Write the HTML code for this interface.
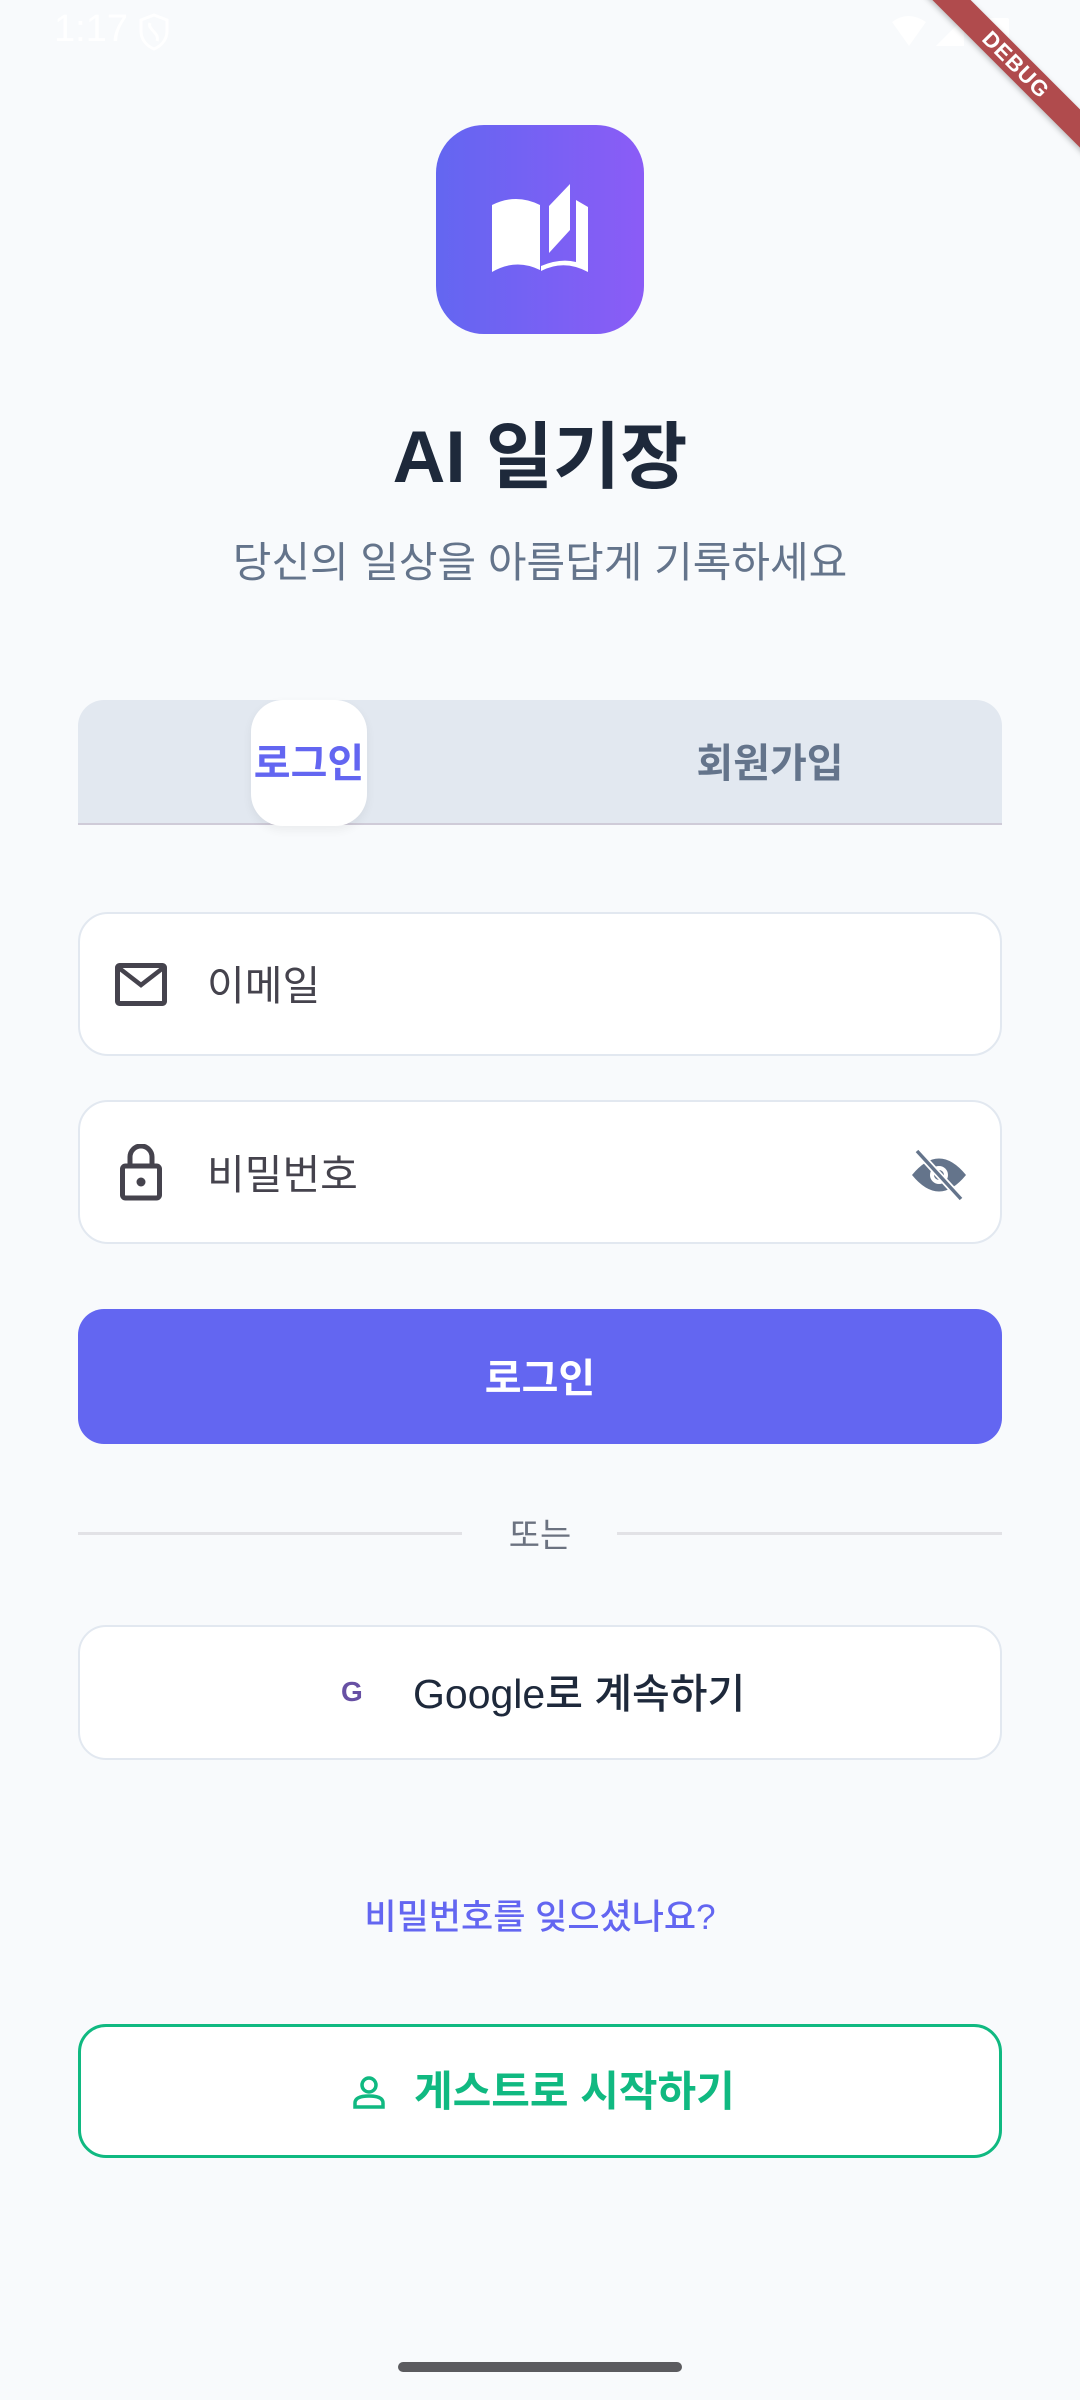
<!DOCTYPE html>
<html><head><meta charset="utf-8">
<style>
*{margin:0;padding:0;box-sizing:border-box}
body{width:1080px;height:2400px;background:#f8fafc;position:relative;overflow:hidden;font-family:"Liberation Sans","Noto Sans CJK KR",sans-serif}
.abs{position:absolute}
.c{text-align:center;left:0;width:1080px}
.field{position:absolute;left:78px;width:924px;height:144px;background:#fff;border:2px solid #e2e8f0;border-radius:30px}
</style></head><body>
<div class="abs" style="left:54px;top:8px;color:#fff;font-size:38px;font-family:'Liberation Sans',sans-serif">1:17</div>
<svg class="abs" style="left:138px;top:13px" width="32" height="38" viewBox="0 0 32 38"><path d="M16 2 L29 7 V18 C29 27 23 33 16 36 C9 33 3 27 3 18 V7 Z" fill="none" stroke="#fff" stroke-width="3"/><path d="M12 10 C9 16 22 20 19 28" fill="none" stroke="#fff" stroke-width="3"/></svg>
<svg class="abs" style="left:890px;top:14px" width="120" height="34" viewBox="0 0 120 34"><path d="M2 8 Q18 -4 36 8 L19 32 Z" fill="#fff"/><path d="M46 32 L74 4 V32 Z" fill="#fff"/><rect x="99" y="4" width="20" height="30" rx="2" fill="#fff"/></svg>
<div class="abs" style="left:866px;top:51px;width:300px;height:27px;background:#b04b4d;transform:rotate(45deg);color:#fff;font-weight:bold;font-size:22px;line-height:27px;text-align:center;letter-spacing:1px;box-shadow:0 2px 6px rgba(0,0,0,.25)">DEBUG</div>

<div class="abs" style="left:436px;top:125px;width:208px;height:209px;border-radius:48px;background:linear-gradient(90deg,#6366f1,#8b5cf6)"></div>
<svg class="abs" style="left:436px;top:125px" width="208" height="209" viewBox="436 125 208 209">
<path d="M492 205 Q516 193 540 205 V270 Q516 258 492 272 Z" fill="#fff"/>
<path d="M549 206 L570 184 V230 L549 253 Z" fill="#fff"/>
<path d="M576 200 L588 207 V272 Q564 259 541 271 L541 266 Q560 258 576 262 Z" fill="#fff"/>
</svg>

<div class="abs c" style="top:408px;font-size:73px;font-weight:bold;color:#1e293b;line-height:100px">AI 일기장</div>
<div class="abs c" style="top:535px;font-size:42px;color:#64748b;line-height:56px">당신의 일상을 아름답게 기록하세요</div>

<div class="abs" style="left:78px;top:700px;width:924px;height:124px;background:#e2e8f0;border-radius:26px 26px 0 0"></div>
<div class="abs" style="left:78px;top:823px;width:924px;height:2px;background:#cfcbd8"></div>
<div class="abs" style="left:251px;top:700px;width:116px;height:126px;background:#fff;border-radius:32px;box-shadow:0 4px 10px rgba(0,0,0,.06)"></div>
<div class="abs" style="left:221px;top:736px;width:176px;text-align:center;font-size:40px;font-weight:bold;color:#6366f1;line-height:56px">로그인</div>
<div class="abs" style="left:620px;top:736px;width:300px;text-align:center;font-size:40px;font-weight:bold;color:#64748b;line-height:56px">회원가입</div>

<div class="field" style="top:912px"></div>
<svg class="abs" style="left:115px;top:963px" width="52" height="43" viewBox="0 0 52 43"><rect x="2.5" y="2.5" width="47" height="38" rx="2" fill="none" stroke="#45434d" stroke-width="5"/><path d="M4 5 L26 22 L48 5" fill="none" stroke="#45434d" stroke-width="4.5"/></svg>
<div class="abs" style="left:207px;top:958px;font-size:41px;color:#45434d;line-height:56px">이메일</div>

<div class="field" style="top:1100px"></div>
<svg class="abs" style="left:120px;top:1144px" width="42" height="57" viewBox="0 0 42 57"><path d="M10 22 V13 A11 11 0 0 1 32 13 V22" fill="none" stroke="#45434d" stroke-width="5"/><rect x="2.5" y="22" width="37" height="32" rx="3" fill="none" stroke="#45434d" stroke-width="5"/><circle cx="21" cy="38" r="4.5" fill="#45434d"/></svg>
<div class="abs" style="left:207px;top:1147px;font-size:41px;color:#45434d;line-height:56px">비밀번호</div>
<svg class="abs" style="left:909px;top:1148px" width="60" height="54" viewBox="0 0 60 54"><path d="M3 27 Q30 -6 57 27 Q30 60 3 27 Z" fill="#64748b"/><circle cx="30" cy="27" r="9" fill="#fff"/><circle cx="30" cy="27" r="5" fill="#64748b"/><path d="M8 3 L52 51" stroke="#fff" stroke-width="7"/><path d="M8 3 L52 51" stroke="#64748b" stroke-width="3.5"/></svg>

<div class="abs" style="left:78px;top:1309px;width:924px;height:135px;background:#6366f1;border-radius:26px;color:#fff;font-size:40px;font-weight:bold;text-align:center;line-height:141px">로그인</div>

<div class="abs" style="left:78px;top:1532px;width:384px;height:3px;background:#e2e2e6"></div>
<div class="abs" style="left:617px;top:1532px;width:385px;height:3px;background:#e2e2e6"></div>
<div class="abs c" style="top:1512px;font-size:34px;color:#6b7280;line-height:48px">또는</div>

<div class="field" style="top:1625px;height:135px;border-radius:28px"></div>
<div class="abs" style="left:341px;top:1674px;font-size:28px;font-weight:bold;color:#6750a4;line-height:36px">G</div>
<div class="abs" style="left:413px;top:1665px;font-size:41px;color:#1e293b;line-height:58px;font-weight:500">Google로 계속하기</div>

<div class="abs c" style="top:1893px;font-size:35px;color:#6366f1;line-height:50px;font-weight:500">비밀번호를 잊으셨나요?</div>

<div class="abs" style="left:78px;top:2024px;width:924px;height:134px;border:3px solid #10b981;border-radius:28px;background:#fff"></div>
<svg class="abs" style="left:352px;top:2076px" width="34" height="34" viewBox="0 0 34 34"><circle cx="17" cy="9" r="7" fill="none" stroke="#10b981" stroke-width="3.5"/><path d="M3 31 V27 Q3 20 17 20 Q31 20 31 27 V31 Z" fill="none" stroke="#10b981" stroke-width="3.5"/></svg>
<div class="abs" style="left:414px;top:2063px;font-size:42px;color:#10b981;font-weight:bold;line-height:58px">게스트로 시작하기</div>

<div class="abs" style="left:398px;top:2362px;width:284px;height:10px;border-radius:5px;background:#5b5b5f"></div>
</body></html>
